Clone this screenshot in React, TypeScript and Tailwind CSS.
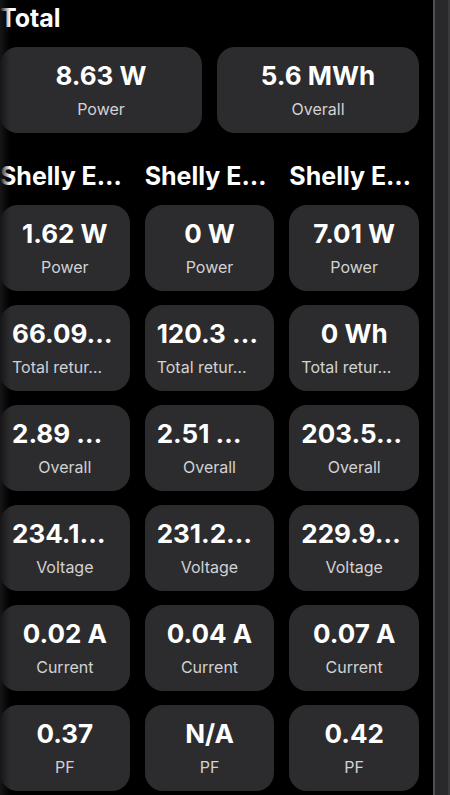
type Stat = {
  value: string;
  label: string;
};

type Device = {
  name: string;
  stats: Stat[];
};

const totals: Stat[] = [
  { value: "8.63 W", label: "Power" },
  { value: "5.6 MWh", label: "Overall" },
];

const devices: Device[] = [
  {
    name: "Shelly E…",
    stats: [
      { value: "1.62 W", label: "Power" },
      { value: "66.09…", label: "Total retur…" },
      { value: "2.89 …", label: "Overall" },
      { value: "234.1…", label: "Voltage" },
      { value: "0.02 A", label: "Current" },
      { value: "0.37", label: "PF" },
    ],
  },
  {
    name: "Shelly E…",
    stats: [
      { value: "0 W", label: "Power" },
      { value: "120.3 …", label: "Total retur…" },
      { value: "2.51 …", label: "Overall" },
      { value: "231.2…", label: "Voltage" },
      { value: "0.04 A", label: "Current" },
      { value: "N/A", label: "PF" },
    ],
  },
  {
    name: "Shelly E…",
    stats: [
      { value: "7.01 W", label: "Power" },
      { value: "0 Wh", label: "Total retur…" },
      { value: "203.5…", label: "Overall" },
      { value: "229.9…", label: "Voltage" },
      { value: "0.07 A", label: "Current" },
      { value: "0.42", label: "PF" },
    ],
  },
];

// text that got cut off starts at the left padding, like an overflowing line does
function StatCard({ value, label }: Stat) {
  const valueCut = value.endsWith("…");
  const labelCut = label.endsWith("…");
  return (
    <div className="h-[86px] rounded-[18px] bg-[#2c2c2e] px-[11px] pt-[13px] flex flex-col items-center">
      <div
        className={`w-full text-[26px] leading-[32px] font-bold text-white whitespace-nowrap overflow-hidden ${
          valueCut ? "text-left pl-[1px]" : "text-center"
        }`}
      >
        {value}
      </div>
      <div
        className={`mt-[5px] w-full text-[16px] leading-[24px] text-[#d2d2d4] whitespace-nowrap overflow-hidden ${
          labelCut ? "text-left pl-[1px]" : "text-center"
        }`}
      >
        {label}
      </div>
    </div>
  );
}

export default function App() {
  return (
    <div
      className="w-[450px] h-[795px] bg-black flex overflow-hidden relative"
      style={{ fontFamily: "Inter, 'Noto Sans', sans-serif" }}
    >
      <div className="absolute left-0 top-0 h-full w-[10px] bg-gradient-to-r from-[#161618] to-transparent pointer-events-none" />
      <div className="w-[419px] shrink-0 pt-[3px] mr-[14px]">
        <h2 className="text-[25px] leading-[30px] font-bold text-white">Total</h2>
        <div className="mt-[14px] grid grid-cols-2 gap-x-[15px]">
          {totals.map((s) => (
            <StatCard key={s.label} {...s} />
          ))}
        </div>

        <div className="mt-[28px] grid grid-cols-3 gap-x-[15px]">
          {devices.map((d, i) => (
            <div key={i} className="flex flex-col min-w-0">
              <h3 className="text-[25px] leading-[30px] font-bold text-white whitespace-nowrap overflow-hidden">
                {d.name}
              </h3>
              <div className="mt-[14px] flex flex-col gap-[14px]">
                {d.stats.map((s) => (
                  <StatCard key={s.label} {...s} />
                ))}
              </div>
            </div>
          ))}
        </div>
      </div>
      <div className="flex-1 bg-[#29292b] border-l-2 border-[#4e4e52] border-r-2 border-r-[#3a3a3d]" />
    </div>
  );
}
